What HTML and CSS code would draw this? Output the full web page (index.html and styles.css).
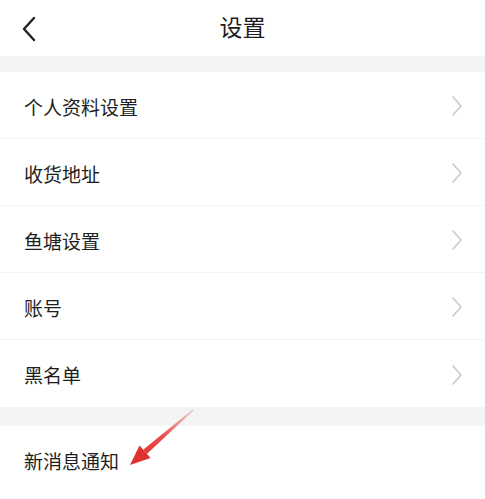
FILE: index.html
```html
<!DOCTYPE html>
<html lang="zh-CN">
<head>
<meta charset="utf-8">
<title>设置</title>
<link rel="stylesheet" href="styles.css">
</head>
<body>
<div class="page">
  <header class="topbar">
    <svg class="back" width="16" height="26" viewBox="0 0 16 26"><path d="M13 2 L3 13 L13 24" fill="none" stroke="#222" stroke-width="2.4" stroke-linecap="round" stroke-linejoin="round"/></svg>
    <h1 class="title">设置</h1>
  </header>
  <div class="band band-top"></div>
  <ul class="list">
    <li class="row"><span class="label">个人资料设置</span><svg class="chev" width="12" height="22" viewBox="0 0 12 22"><path d="M2 2 L10 11 L2 20" fill="none" stroke="#c9c9c9" stroke-width="1.6" stroke-linecap="round" stroke-linejoin="round"/></svg></li>
    <li class="row"><span class="label">收货地址</span><svg class="chev" width="12" height="22" viewBox="0 0 12 22"><path d="M2 2 L10 11 L2 20" fill="none" stroke="#c9c9c9" stroke-width="1.6" stroke-linecap="round" stroke-linejoin="round"/></svg></li>
    <li class="row"><span class="label">鱼塘设置</span><svg class="chev" width="12" height="22" viewBox="0 0 12 22"><path d="M2 2 L10 11 L2 20" fill="none" stroke="#c9c9c9" stroke-width="1.6" stroke-linecap="round" stroke-linejoin="round"/></svg></li>
    <li class="row"><span class="label">账号</span><svg class="chev" width="12" height="22" viewBox="0 0 12 22"><path d="M2 2 L10 11 L2 20" fill="none" stroke="#c9c9c9" stroke-width="1.6" stroke-linecap="round" stroke-linejoin="round"/></svg></li>
    <li class="row last"><span class="label">黑名单</span><svg class="chev" width="12" height="22" viewBox="0 0 12 22"><path d="M2 2 L10 11 L2 20" fill="none" stroke="#c9c9c9" stroke-width="1.6" stroke-linecap="round" stroke-linejoin="round"/></svg></li>
  </ul>
  <div class="band band-mid"></div>
  <ul class="list">
    <li class="row last"><span class="label">新消息通知</span></li>
  </ul>
  <svg class="arrow" width="485" height="499" viewBox="0 0 485 499">
    <defs>
      <linearGradient id="ag" x1="193" y1="410" x2="135" y2="460" gradientUnits="userSpaceOnUse">
        <stop offset="0" stop-color="#f29a9a" stop-opacity="0.5"/>
        <stop offset="0.5" stop-color="#e8504f"/>
        <stop offset="1" stop-color="#e0302f"/>
      </linearGradient>
    </defs>
    <polygon points="193.6,410.5 192.4,409.5 143.2,449.8 146.8,454" fill="url(#ag)"/>
    <polygon points="130,465 139.5,445.5 150.5,458" fill="#e0302f"/>
  </svg>
</div>
</body>
</html>
```
FILE: styles.css
```css
* { box-sizing: border-box; }
html, body { margin: 0; padding: 0; background: #fff; }
body {
  font-family: "Noto Sans CJK SC", "Noto Sans", sans-serif;
  color: #1e1e1e;
}
.page {
  position: relative;
  width: 485px;
  height: 499px;
  overflow: hidden;
}
.topbar {
  height: 56px;
  display: flex;
  align-items: center;
  justify-content: center;
  position: relative;
}
.back {
  position: absolute;
  left: 21px;
  top: 16px;
}
.title {
  margin: -3px 0 0;
  font-size: 23px;
  font-weight: 400;
  line-height: 1;
}
.band { background: #f4f4f4; }
.band-top { height: 16px; }
.band-mid { height: 19px; }
.list {
  list-style: none;
  margin: 0;
  padding: 0;
}
.row {
  height: 67px;
  display: flex;
  align-items: center;
  justify-content: space-between;
  padding: 2px 22px 0 24px;
  border-bottom: 1px solid #f3f3f3;
}
.row.last { border-bottom: none; }
.label {
  font-size: 19px;
  line-height: 1;
}
.chev { display: block; }
.arrow {
  position: absolute;
  left: 0;
  top: 0;
  pointer-events: none;
}
```
